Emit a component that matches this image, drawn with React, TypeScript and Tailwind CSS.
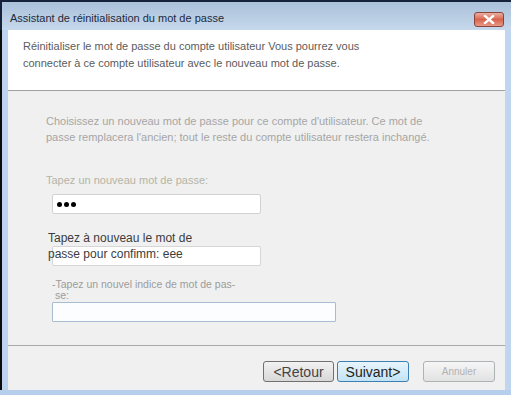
import React from 'react';

const font = { fontFamily: '"Liberation Sans", Arial, sans-serif' };

const CloseButton: React.FC = () => (
  <div className="w-[30px] h-[15px] rounded-[3px] border border-[#8a4438] bg-gradient-to-b from-[#eab0a2] via-[#d8634d] to-[#e59886] flex items-center justify-center">
    <svg width="14" height="9" viewBox="0 0 14 9">
      <path d="M3 1 L11 8 M11 1 L3 8" stroke="#ffffff" strokeWidth="2.4" strokeLinecap="square" />
    </svg>
  </div>
);

const App: React.FC = () => {
  return (
    <div className="w-[511px] h-[395px] flex flex-col bg-[#bcd3ee] overflow-hidden" style={font}>
      {/* title bar */}
      <div className="h-[30px] flex flex-col shrink-0 border-t-2 border-l-2 border-[#16213a] bg-gradient-to-b from-[#aac1da] to-[#c6d8ec]">
        <div className="flex-1 flex items-end justify-between pl-[8px] pr-[6px] pb-[3px]">
          <span className="text-[11px] leading-[14px] pb-[2px] text-[#1e2a3a]">Assistant de réinitialisation du mot de passe</span>
          <div className="mr-[1px]">
            <CloseButton />
          </div>
        </div>
      </div>

      <div className="flex-1 flex">
        {/* left frame */}
        <div className="w-[8px] shrink-0 flex">
          <div className="w-[2px] bg-[#0c0c0c]" />
          <div className="flex-1 bg-[#bdd4ef]" />
        </div>

        {/* content */}
        <div className="w-[497px] flex flex-col">
          <div className="h-[60px] bg-white pl-[15px] pt-[8px] text-[11px] leading-[17px] text-[#5c5c5c]">
            <p>Réinitialiser le mot de passe du compte utilisateur Vous pourrez vous</p>
            <p>connecter à ce compte utilisateur avec le nouveau mot de passe.</p>
          </div>
          <div className="h-[1px] bg-[#a0a0a0]" />

          <div className="h-[254px] bg-[#f0f0f0] pl-[38px] pt-[22px]">
            <div className="text-[11px] leading-[16px] text-[#a6a6a6]">
              <p>Choisissez un nouveau mot de passe pour ce compte d'utilisateur. Ce mot de</p>
              <p>passe remplacera l'ancien; tout le reste du compte utilisateur restera inchangé.</p>
            </div>

            <p className="mt-[28px] text-[11px] leading-[14px] text-[#b4b5a6]">Tapez un nouveau mot de passe:</p>
            <div className="mt-[7px] ml-[6px] w-[209px] h-[20px] bg-white border border-[#d2d2d2] rounded-[2px] flex items-center pl-[4px] gap-[2px]">
              <span className="w-[5px] h-[5px] rounded-full bg-black" />
              <span className="w-[5px] h-[5px] rounded-full bg-black" />
              <span className="w-[5px] h-[5px] rounded-full bg-black" />
            </div>

            <div className="mt-[16px] ml-[2px]">
              <p className="relative z-10 text-[12px] leading-[16px] text-[#3c3c3c]">
                Tapez à nouveau le mot de
                <br />
                passe pour confimm: eee
              </p>
              <div className="mt-[-16px] ml-[4px] w-[209px] h-[20px] bg-white border border-[#d6d6d6] rounded-[2px]" />
            </div>

            <div className="mt-[13px] ml-[6px] text-[10.5px] leading-[11px] text-[#9c9c9c]">
              <p>-Tapez un nouvel indice de mot de pas-</p>
              <p className="ml-[3px]">se:</p>
            </div>
            <div className="mt-[1px] ml-[6px] w-[284px] h-[20px] bg-[#fbfdff] border border-[#a9bdd0] rounded-[1px]" />
          </div>

          <div className="h-[1px] bg-[#a8a8a8]" />
          <div className="flex-1 bg-[#f0f0f0] flex items-start pt-[15px] pl-[255px]">
            <button className="w-[71px] h-[21px] rounded-[3px] border border-[#707070] bg-gradient-to-b from-[#f2f2f2] to-[#d8d8d8] text-[14px] leading-[18px] text-[#444444]">
              &lt;Retour
            </button>
            <button className="ml-[3px] w-[72px] h-[21px] rounded-[3px] border border-[#3c7fb1] bg-gradient-to-b from-[#e8f5fc] to-[#c2e3f5] text-[14px] leading-[18px] text-[#222222]">
              Suivant&gt;
            </button>
            <button className="ml-[14px] w-[72px] h-[21px] rounded-[3px] border border-[#adb2b5] bg-gradient-to-b from-[#f6f6f6] to-[#e2e2e2] text-[10px] text-[#b2b2b2]">
              Annuler
            </button>
          </div>
        </div>

        {/* right frame */}
        <div className="flex-1 bg-[#c0d6ee]" />
      </div>

      {/* bottom frame */}
      <div className="h-[5px] shrink-0 bg-[#b6cfec]" />
    </div>
  );
};

export default App;
